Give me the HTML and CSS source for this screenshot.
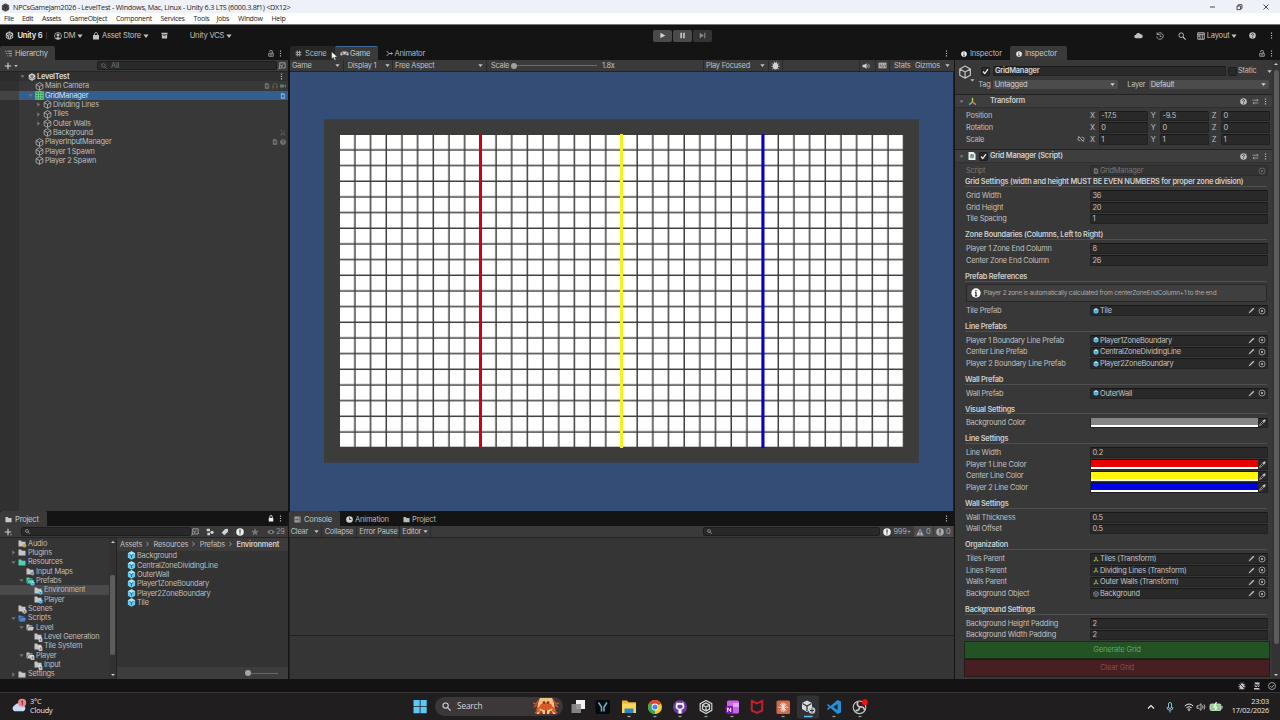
FILE: index.html
```html
<!DOCTYPE html>
<html lang="en">
<head>
<meta charset="utf-8">
<title>NPCsGameJam2026 - LevelTest</title>
<link rel="stylesheet" href="styles.css">
</head>
<body>
<svg class="defs" aria-hidden="true">
  <symbol id="cube" viewBox="0 0 16 16"><path d="M8 1.2 14 4.5v7L8 14.8 2 11.500v-7zM2 4.500 8 8l6-3.500M8 8v6.800" fill="none" stroke="currentColor" stroke-width="1.400" stroke-linejoin="round"/></symbol>
  <symbol id="prefab" viewBox="0 0 16 16"><path d="M8 .5 14.500 4v8L8 15.500 1.500 12V4z" fill="#69c9ea"/><path d="M8 .5 14.500 4 8 7.500 1.500 4z" fill="#a5e6fa"/><path d="M4.500 6 8 8l3.500-2M8 8v4.500" fill="none" stroke="#25698a" stroke-width="1.700"/></symbol>
  <symbol id="unity" viewBox="0 0 16 16"><path d="M8 .5 14.500 4.200v7.600L8 15.500l-6.500-3.700V4.200z" fill="currentColor"/><path d="M8 8 3.500 5.500M8 8l4.500-2.500M8 8v5M5.500 3.500 8 5l2.500-1.500M3.500 8.500v2.300l2.200 1.300M12.500 8.500v2.300l-2.200 1.300" fill="none" stroke="#222" stroke-width="1.500"/></symbol>
  <symbol id="gridic" viewBox="0 0 16 16"><path d="M1 1h14v14H1z" fill="#2f7550"/><path d="M1.500 1v14M6 1v14M10.300 1v14M14.500 1v14M1 1.500h14M1 6h14M1 10.300h14M1 14.500h14" stroke="#7de08d" stroke-width="1.500"/></symbol>
  <symbol id="down" viewBox="0 0 8 8"><path d="M.5 2h7L4 6.500z" fill="currentColor"/></symbol>
  <symbol id="right" viewBox="0 0 8 8"><path d="M2 .5v7L6.500 4z" fill="currentColor"/></symbol>
  <symbol id="kebab" viewBox="0 0 4 12"><path d="M1 1h2v2H1zM1 5h2v2H1zM1 9h2v2H1z" fill="currentColor"/></symbol>
  <symbol id="lock" viewBox="0 0 12 14"><path d="M1.500 6.500h9v6h-9zM3.500 4V2q0-1 1-1h3q1 0 1 1v4.500" fill="none" stroke="currentColor" stroke-width="1.500"/><path d="M4 9h4v1.500H4z" fill="currentColor"/></symbol>
  <symbol id="lockc" viewBox="0 0 12 14"><path d="M3.500 6V3.500a2.500 2.500 0 0 1 5 0V6" fill="none" stroke="currentColor" stroke-width="1.600"/><path d="M1.500 6h9v7h-9z" fill="currentColor"/></symbol>
  <symbol id="mag" viewBox="0 0 12 12"><circle cx="4.800" cy="4.800" r="3.500" fill="none" stroke="currentColor" stroke-width="1.400"/><path d="m7.500 7.500 4 4" stroke="currentColor" stroke-width="1.600"/></symbol>
  <symbol id="popout" viewBox="0 0 14 14"><path d="M3 6V1.500h9.500v9H8" fill="none" stroke="currentColor" stroke-width="1.300"/><circle cx="4.500" cy="8.500" r="2.500" fill="none" stroke="currentColor" stroke-width="1.300"/><path d="M2.500 10.500.5 13M6.500 6.500l3-2.500" stroke="currentColor" stroke-width="1.300"/></symbol>
  <symbol id="folder" viewBox="0 0 16 14"><path d="M1 1h5l2 2.500h7V13H1z" fill="currentColor"/></symbol>
  <symbol id="folderopen" viewBox="0 0 16 14"><path d="M1 12V1h5l2 2h5v2H4.500L2 11z" fill="currentColor"/><path d="M5 6h11l-2.500 7H2z" fill="currentColor"/></symbol>
  <symbol id="info" viewBox="0 0 16 16"><circle cx="8" cy="8" r="7.500" fill="currentColor"/><path d="M8 3v2.200M8 6.800V13M6.500 7H8M6.200 12.500h3.600" stroke="#2a2a2a" stroke-width="1.900"/></symbol>
  <symbol id="bang" viewBox="0 0 16 16"><circle cx="8" cy="8" r="7.500" fill="currentColor"/><path d="M8 3v6.500M8 11v2.200" stroke="#2a2a2a" stroke-width="2.200"/></symbol>
  <symbol id="help" viewBox="0 0 16 16"><circle cx="8" cy="8" r="7.500" fill="currentColor"/><path d="M5.500 6.200Q5.500 3.800 8 3.800t2.500 2.200Q10.500 7.500 8 8.500v1.300M8 11v2" fill="none" stroke="#2a2a2a" stroke-width="1.800"/></symbol>
  <symbol id="sliders" viewBox="0 0 16 16"><path d="M1 5h13M11 2l3 3-3 3M2 11.500h13M5.500 8.500l-3 3 3 3" fill="none" stroke="currentColor" stroke-width="1.500"/></symbol>
  <symbol id="check" viewBox="0 0 10 10"><path d="m1.500 5 2.500 3 4.500-6.500" fill="none" stroke="#eee" stroke-width="1.700"/></symbol>
  <symbol id="axes" viewBox="0 0 16 16"><path d="M8 9V1.500" stroke="#a7de4b" stroke-width="2.400"/><path d="M8 9 2 13.500" stroke="#60b9e8" stroke-width="2.400"/><path d="m8 9 6 4.500" stroke="#ec7b45" stroke-width="2.400"/></symbol>
  <symbol id="axesg" viewBox="0 0 16 16"><path d="M8 9V2" stroke="#b5d844" stroke-width="2.800"/><path d="M7.500 9.500 2 14" stroke="#6fcf76" stroke-width="2.800"/><path d="m9 9.500 5 4" stroke="#e7a13c" stroke-width="2.800"/></symbol>
  <symbol id="pencil" viewBox="0 0 12 12"><path d="m1 11 1-2.600L9 1.200 10.900 3 3.600 10z" fill="currentColor"/></symbol>
  <symbol id="target" viewBox="0 0 12 12"><circle cx="6" cy="6" r="4.500" fill="none" stroke="currentColor" stroke-width="1"/><circle cx="6" cy="6" r="1.500" fill="currentColor"/></symbol>
  <symbol id="dropper" viewBox="0 0 12 12"><path d="m1 11 .8-2.600 5-5 1.800 1.800-5 5z" fill="none" stroke="currentColor" stroke-width="1.100"/><path d="M6 2.500 9.500 6l.8-1.500 1.200-2.800L10 .5 7.500 1.700z" fill="currentColor"/></symbol>
  <symbol id="doc" viewBox="0 0 12 14"><path d="M1 .5h7l3 3V13.500H1z" fill="currentColor"/><path d="M3 5.500h6M3 8.500h6M5 4v7M7.500 4v7" stroke="#333"/></symbol>
  <symbol id="scriptic" viewBox="0 0 14 16"><path d="M0 0h10l4 4v12H0z" fill="#eee"/><path d="M3 6.500h8M3 10h8M5.800 4 5 12.500M9.200 4l-.8 8.500" stroke="#24855d" stroke-width="1.500"/></symbol>
  <symbol id="pad" viewBox="0 0 18 10"><path d="M5 1h8q4 0 4.500 5 0 4-3 3l-2-2h-7l-2 2q-3 1-3-3Q1 1 5 1z" fill="currentColor"/><path d="M4.800 2.500v3.600M3 4.300h3.600M12 4.300h3M13.500 2.800v3" stroke="#333" stroke-width="1.200"/></symbol>
  <symbol id="chev" viewBox="0 0 8 8"><path d="m2 .8 3.500 3.200L2 7.200" fill="none" stroke="currentColor" stroke-width="1.100"/></symbol>
  <symbol id="bug" viewBox="0 0 16 16"><ellipse cx="8" cy="9" rx="4.600" ry="6" fill="currentColor"/><path d="M1.500 4.500 5 7M14.500 4.500 11 7M.8 9.500h14.400M2 14.500 5 12M14 14.500 11 12M5.500 1l1.500 2.500M10.500 1 9 3.500" stroke="currentColor" stroke-width="1.500"/></symbol>
</svg>

<div class="app">
  <header class="title">
    <svg class="i9 ink"><use href="#unity"/></svg><span>NPCsGameJam2026 - LevelTest - Windows, Mac, Linux - Unity 6.3 LTS (6000.3.8f1) &lt;DX12&gt;</span>
    <svg class="win" viewBox="0 0 70 12"><path d="M9 6h5M62.500 3.500l5 5m0-5-5 5M36 5h3.600v3.600H36zM37.300 5V3.700h3.700v3.600h-1.200" fill="none" stroke="#222" stroke-width=".8"/></svg>
  </header>
  <nav class="menu"><span>File</span><span>Edit</span><span>Assets</span><span>GameObject</span><span>Component</span><span>Services</span><span>Tools</span><span>Jobs</span><span>Window</span><span>Help</span></nav>
  <div class="maintool">
    <svg class="i9"><use href="#unity"/></svg><b>Unity 6</b><i class="sep"></i>
    <svg class="i8" viewBox="0 0 16 16"><circle cx="8" cy="8" r="7" fill="none" stroke="currentColor" stroke-width="1.500"/><circle cx="8" cy="6" r="3" fill="currentColor"/><path d="M3 13q5-6 10 0-5 3-10 0z" fill="currentColor"/></svg><span>DM</span><svg class="i6"><use href="#down"/></svg>
    <svg class="i8" viewBox="0 0 16 16"><path d="M2 6h12v9H2z" fill="currentColor"/><path d="M5 8V4q0-3 3-3t3 3v4" fill="none" stroke="currentColor" stroke-width="1.500"/></svg><span>Asset Store</span><svg class="i6"><use href="#down"/></svg>
    <svg class="i7" viewBox="0 0 16 16"><path d="M1 1.500h14V5H1zM2 6h12v9H2z" fill="currentColor"/><path d="M5.500 8.500h5" stroke="#222" stroke-width="1.800"/></svg><span>Unity VCS</span><svg class="i6"><use href="#down"/></svg>
    <div class="play"><button><svg viewBox="0 0 10 10"><path d="M2 1v8l7-4z" fill="currentColor"/></svg></button><button><svg viewBox="0 0 10 10"><path d="M2 1h2.200v8H2zM6 1h2.200v8H6z" fill="currentColor"/></svg></button><button class="off"><svg viewBox="0 0 10 10"><path d="M1 1v8l6-4zM7.500 1H9v8H7.500z" fill="currentColor"/></svg></button></div>
    <svg class="cloud" viewBox="0 0 18 12"><path d="M4 11.500a3.500 3.500 0 0 1 0-7 5 5 0 0 1 9-1A4 4 0 0 1 14 11.500z" fill="currentColor"/></svg>
    <svg class="i8" viewBox="0 0 16 16"><path d="M2.500 4.500A6.500 6.500 0 1 1 1.500 9M2 1v4h4M8 4v4.500l3 1.500" fill="none" stroke="currentColor" stroke-width="1.500"/></svg>
    <svg class="i8"><use href="#mag"/></svg>
    <svg class="i8" viewBox="0 0 16 16"><path d="M1.500 1.500h13v13h-13zM1 4.500h14M6 4.500v10M10.500 4.500v10M2 8h4" fill="none" stroke="currentColor" stroke-width="1.800"/></svg><span>Layout</span><svg class="i6"><use href="#down"/></svg>
    <svg class="i7"><use href="#help"/></svg><svg class="keb"><use href="#kebab"/></svg>
  </div>

  <main class="work">
    <section class="left">
      <div class="tabs">
        <div class="tab on t-hier"><svg class="i7" viewBox="0 0 12 12"><path d="M0 2h2M4 2h8M2 6h2M6 6h6M4 10h1.500M7 10h5" stroke="currentColor" stroke-width="1.300"/></svg>Hierarchy</div>
        <span class="tabend"><svg class="lk"><use href="#lock"/></svg><svg class="keb"><use href="#kebab"/></svg></span>
      </div>
      <div class="tools hiertools"><svg class="i8 lite" viewBox="0 0 10 10"><path d="M5 1v8M1 5h8" stroke="currentColor" stroke-width="1.400"/></svg><svg class="i4"><use href="#down"/></svg><div class="search dim"><svg class="i6"><use href="#mag"/></svg>All</div><svg class="i8"><use href="#popout"/></svg></div>
      <div class="tree">
        <div class="row scene"><svg class="i5 tw"><use href="#down"/></svg><svg class="i8 wh"><use href="#unity"/></svg><b>LevelTest</b><span class="ends"><svg class="keb"><use href="#kebab"/></svg></span></div>
        <div class="row r1"><i class="tw"></i><svg class="i9"><use href="#cube"/></svg><span>Main Camera</span><span class="ends dim"><svg class="i6"><use href="#doc"/></svg><svg class="i6" viewBox="0 0 12 12"><path d="M2 11V5q0-4 4-4t4 4v6M1 7h2v4M11 7H9v4" fill="none" stroke="#86693a" stroke-width="1.300"/></svg><svg class="i6" viewBox="0 0 12 12"><path d="M0 3h8v6H0zM9 5l3-2v6L9 7z" fill="#527e80"/></svg></span></div>
        <div class="row r1 sel"><svg class="i5 tw"><use href="#down"/></svg><svg class="i9"><use href="#gridic"/></svg><span>GridManager</span><span class="ends"><svg class="i6 bluei"><use href="#doc"/></svg></span></div>
        <div class="row r2"><svg class="i5 tw"><use href="#right"/></svg><svg class="i9"><use href="#cube"/></svg><span>Dividing Lines</span></div>
        <div class="row r2"><svg class="i5 tw"><use href="#right"/></svg><svg class="i9"><use href="#cube"/></svg><span>Tiles</span></div>
        <div class="row r2"><svg class="i5 tw"><use href="#right"/></svg><svg class="i9"><use href="#cube"/></svg><span>Outer Walls</span></div>
        <div class="row r2"><i class="tw"></i><svg class="i9"><use href="#cube"/></svg><span>Background</span><span class="ends dim"><svg class="i6" viewBox="0 0 12 12"><path d="M1 1h2v2M7 1h2M5 5 2 11M6 5l4 6M3 8h2M10 3v2" fill="none" stroke="currentColor" stroke-width="1.300"/></svg></span></div>
        <div class="row r1"><i class="tw"></i><svg class="i9"><use href="#cube"/></svg><span>PlayerInputManager</span><span class="ends dim"><svg class="i6"><use href="#doc"/></svg><svg class="i6"><use href="#help"/></svg></span></div>
        <div class="row r1"><i class="tw"></i><svg class="i9"><use href="#cube"/></svg><span>Player 1 Spawn</span></div>
        <div class="row r1"><i class="tw"></i><svg class="i9"><use href="#cube"/></svg><span>Player 2 Spawn</span></div>
      </div>

      <div class="tabs low">
        <div class="tab on t-proj"><svg class="i7"><use href="#folder"/></svg>Project</div>
        <span class="tabend"><svg class="lk wh"><use href="#lockc"/></svg><svg class="keb"><use href="#kebab"/></svg></span>
      </div>
      <div class="tools projtools"><svg class="i8 lite" viewBox="0 0 10 10"><path d="M5 1v8M1 5h8" stroke="currentColor" stroke-width="1.400"/><path d="M7.500 8H10L8.700 9.500z" fill="currentColor"/></svg><div class="search"><svg class="i5"><use href="#mag"/></svg></div>
        <svg class="i8"><use href="#popout"/></svg>
        <svg class="i8 lite" viewBox="0 0 12 12"><path d="M1 1h5v4H1zM2 7h4v4H2z" fill="currentColor"/><circle cx="9" cy="6.500" r="2.500" fill="currentColor"/></svg>
        <svg class="i8 lite" viewBox="0 0 12 12"><path d="M6 1.500 10.500 1v4.500L5 11 1 7z" fill="currentColor"/></svg>
        <svg class="i8 wh"><use href="#bang"/></svg>
        <svg class="i8 dim" viewBox="0 0 12 12"><path d="m6 .5 1.600 3.700 4 .3-3 2.600 1 4L6 9l-3.600 2.100 1-4-3-2.600 4-.3z" fill="currentColor"/></svg>
        <svg class="i8 dim" viewBox="0 0 14 10"><path d="M0 5q7-8 14 0-7 8-14 0z" fill="currentColor"/><circle cx="7" cy="5" r="2" fill="#333"/></svg><span class="n29">29</span></div>
      <div class="proj">
        <div class="folders">
          <div class="row f1"><i class="tw"></i><span class="badged"><svg class="fi"><use href="#folder"/></svg><svg class="bdg" viewBox="0 0 8 8"><circle cx="4" cy="4" r="3" fill="#c9a63c"/></svg></span><span>Audio</span></div>
          <div class="row f1"><svg class="i5 tw"><use href="#right"/></svg><svg class="fi"><use href="#folder"/></svg><span>Plugins</span></div>
          <div class="row f1"><svg class="i5 tw"><use href="#down"/></svg><svg class="fi teal"><use href="#folder"/></svg><span>Resources</span></div>
          <div class="row f2"><i class="tw"></i><span class="badged"><svg class="fi"><use href="#folder"/></svg><svg class="bdg" viewBox="0 0 8 8"><circle cx="4" cy="4" r="3" fill="#8b9aa0"/></svg></span><span>Input Maps</span></div>
          <div class="row f2"><svg class="i5 tw"><use href="#down"/></svg><span class="badged"><svg class="fi teal"><use href="#folderopen"/></svg><svg class="bdg"><use href="#prefab"/></svg></span><span>Prefabs</span></div>
          <div class="row f3 cur"><i class="tw"></i><span class="badged"><svg class="fi"><use href="#folder"/></svg><svg class="bdg"><use href="#prefab"/></svg></span><span>Environment</span></div>
          <div class="row f3"><i class="tw"></i><span class="badged"><svg class="fi"><use href="#folder"/></svg><svg class="bdg"><use href="#prefab"/></svg></span><span>Player</span></div>
          <div class="row f1"><i class="tw"></i><span class="badged"><svg class="fi"><use href="#folder"/></svg><svg class="bdg wh"><use href="#unity"/></svg></span><span>Scenes</span></div>
          <div class="row f1"><svg class="i5 tw"><use href="#down"/></svg><svg class="fi blue"><use href="#folderopen"/></svg><span>Scripts</span></div>
          <div class="row f2"><svg class="i5 tw"><use href="#down"/></svg><svg class="fi"><use href="#folderopen"/></svg><span>Level</span></div>
          <div class="row f3"><i class="tw"></i><span class="badged"><svg class="fi"><use href="#folder"/></svg><svg class="bdg wh"><use href="#doc"/></svg></span><span>Level Generation</span></div>
          <div class="row f3"><i class="tw"></i><span class="badged"><svg class="fi"><use href="#folder"/></svg><svg class="bdg wh"><use href="#doc"/></svg></span><span>Tile System</span></div>
          <div class="row f2"><svg class="i5 tw"><use href="#down"/></svg><span class="badged"><svg class="fi"><use href="#folderopen"/></svg><svg class="bdg wh"><use href="#doc"/></svg></span><span>Player</span></div>
          <div class="row f3"><i class="tw"></i><span class="badged"><svg class="fi"><use href="#folder"/></svg><svg class="bdg wh"><use href="#doc"/></svg></span><span>Input</span></div>
          <div class="row f1"><svg class="i5 tw"><use href="#right"/></svg><svg class="fi"><use href="#folder"/></svg><span>Settings</span></div>
        </div>
        <div class="vscroll"><svg viewBox="0 0 8 8"><path d="M0 6h8L4 2z" fill="#ccc"/></svg><i></i><svg viewBox="0 0 8 8"><path d="M0 2h8L4 6z" fill="#ccc"/></svg></div>
        <div class="assets">
          <div class="crumbs"><span>Assets</span><svg class="i6"><use href="#chev"/></svg><span>Resources</span><svg class="i6"><use href="#chev"/></svg><span>Prefabs</span><svg class="i6"><use href="#chev"/></svg><b>Environment</b></div>
          <div class="files">
            <div class="row"><svg class="i9"><use href="#prefab"/></svg>Background</div>
            <div class="row"><svg class="i9"><use href="#prefab"/></svg>CentralZoneDividingLine</div>
            <div class="row"><svg class="i9"><use href="#prefab"/></svg>OuterWall</div>
            <div class="row"><svg class="i9"><use href="#prefab"/></svg>Player1ZoneBoundary</div>
            <div class="row"><svg class="i9"><use href="#prefab"/></svg>Player2ZoneBoundary</div>
            <div class="row"><svg class="i9"><use href="#prefab"/></svg>Tile</div>
          </div>
          <div class="foot"><i class="knob"></i><i class="track"></i></div>
        </div>
      </div>
    </section>

    <section class="center">
      <div class="tabs">
        <div class="tab dimtab t-scene"><svg class="i7" viewBox="0 0 12 12"><path d="M4 1v10M8 1v10M1 4h10M1 8h10" stroke="currentColor" stroke-width="1.500"/></svg>Scene</div>
        <div class="tab on focus t-game"><svg class="padic"><use href="#pad"/></svg>Game</div>
        <div class="tab t-anim"><svg class="i7" viewBox="0 0 12 12"><path d="M1 1.500l4 4.500-4 4.500M5 6h6M9 4l2 2-2 2" fill="none" stroke="currentColor" stroke-width="1.500"/></svg>Animator</div>
        <span class="tabend"><svg class="keb"><use href="#kebab"/></svg></span>
        <svg class="cursor" viewBox="0 0 10 14"><path d="M1 1v10l2.500-2 1.700 4 1.800-.8-1.700-3.700H9z" fill="#fff" stroke="#333" stroke-width=".6"/></svg>
      </div>
      <div class="tools gametools">
        <span>Game</span><svg class="i5"><use href="#down"/></svg><span class="cell">Display 1</span><svg class="i5"><use href="#down"/></svg><span class="cell tight">Free Aspect</span><svg class="i5"><use href="#down"/></svg><span class="cell">Scale</span>
        <div class="slider"><i></i></div><span>1.8x</span>
        <span class="cell tight">Play Focused</span><svg class="i5"><use href="#down"/></svg><span class="cell icn"><svg class="i9 lite"><use href="#bug"/></svg></span><i class="cell"></i>
        <span class="cell icn"><svg class="i8 lite" viewBox="0 0 14 12"><path d="M1 4h3l4-3v10L4 8H1z" fill="currentColor"/><path d="M9.500 3.500q2 2.500 0 5M11.500 2q3 4 0 8" fill="none" stroke="currentColor"/></svg></span>
        <span class="cell icn"><svg class="i9" viewBox="0 0 16 12"><path d="M1 1h14v10H1z" fill="currentColor"/><path d="M3 3.500h2M7 3.500h2M11 3.500h2M3 6h3M8 6h2M12 6h2M3 8.500h1.500M6 8.500h5M12 8.500h2" stroke="#333" stroke-width="1.300"/></svg></span>
        <span class="cell">Stats</span><span>Gizmos</span><svg class="i5"><use href="#down"/></svg>
      </div>
      <div class="gameview">
        <svg class="board" viewBox="324 119 595 344">
          <defs><pattern id="tiles" x="340" y="135" width="15.680" height="15.670" patternUnits="userSpaceOnUse"><rect width="14.200" height="14.200" fill="#fff"/></pattern></defs>
          <path d="M324 119.300h595v343.500H324z" fill="#3c3c3b"/>
          <path d="M340 135h563.200v312.100H340z" fill="url(#tiles)"/>
          <path d="M480.500 134v314" stroke="#d00010" stroke-width="3"/>
          <path d="M621.500 134v314" stroke="#f8f01c" stroke-width="3"/>
          <path d="M763 134v314" stroke="#0c00c4" stroke-width="3"/>
        </svg>
      </div>
      <div class="tabs low">
        <div class="tab on t-cons"><svg class="i7" viewBox="0 0 12 12"><path d="M1 1h10v10H1z" fill="currentColor"/><path d="M2 3.500h6M2 6h6M2 8.500h6M9 1v10" stroke="#333" stroke-width="1.200"/></svg>Console</div>
        <div class="tab t-anm"><svg class="i7 lite" viewBox="0 0 12 12"><circle cx="6" cy="6" r="5.700" fill="currentColor"/><path d="M6 2.500V6h3" fill="none" stroke="#222" stroke-width="1.400"/></svg>Animation</div>
        <div class="tab t-prj"><svg class="i7"><use href="#folder"/></svg>Project</div>
        <span class="tabend"><svg class="keb"><use href="#kebab"/></svg></span>
      </div>
      <div class="tools constools"><span>Clear</span><svg class="i5"><use href="#down"/></svg><span class="cell">Collapse</span><span class="cell">Error Pause</span><span class="cell">Editor</span><svg class="i5"><use href="#down"/></svg><i class="cell"></i>
        <div class="search"><svg class="i5"><use href="#mag"/></svg></div>
        <span class="cnt"><svg class="i8 wh"><use href="#bang"/></svg>999+</span><span class="cnt lit"><svg class="i8" viewBox="0 0 16 16"><path d="M8 1 15.500 15H.5z" fill="currentColor"/><path d="M8 5v5M8 11.500v2" stroke="#333" stroke-width="1.800"/></svg>0</span><span class="cnt lit"><svg class="i8"><use href="#bang"/></svg>0</span></div>
      <div class="console"><div class="log"></div></div>
    </section>

    <section class="inspector">
      <div class="tabs">
        <div class="tab t-in1"><svg class="i6 wh"><use href="#info"/></svg>Inspector</div>
        <div class="tab on t-in2"><svg class="i6 wh"><use href="#info"/></svg>Inspector</div>
        <span class="tabend"><svg class="lk"><use href="#lock"/></svg><svg class="keb"><use href="#kebab"/></svg></span>
      </div>
      <div class="insp">
        <div class="body">
          <div class="objhead">
            <svg class="big" viewBox="0 0 18 18"><use href="#cube" width="15" height="15"/><path d="M13 15h4.500l-2.200 2.500z" fill="currentColor"/></svg>
            <div class="l1"><span class="chk"><svg><use href="#check"/></svg></span><b class="inp">GridManager</b><span class="chk"></span><span class="st">Static</span><svg class="i5"><use href="#down"/></svg></div>
            <div class="l2"><span>Tag</span><span class="dd">Untagged<svg class="i5"><use href="#down"/></svg></span><span>Layer</span><span class="dd">Default<svg class="i5"><use href="#down"/></svg></span></div>
          </div>
          <div class="comp"><svg class="i5 tw"><use href="#down"/></svg><svg class="i9"><use href="#axes"/></svg><span></span><b>Transform</b><svg class="i7"><use href="#help"/></svg><svg class="i7"><use href="#sliders"/></svg><svg class="keb"><use href="#kebab"/></svg></div>
          <div class="xyzs">
            <div class="xyz"><span>Position</span><i></i><em>X</em><span class="inp">-17.5</span><em>Y</em><span class="inp">-9.5</span><em>Z</em><span class="inp">0</span></div>
            <div class="xyz"><span>Rotation</span><i></i><em>X</em><span class="inp">0</span><em>Y</em><span class="inp">0</span><em>Z</em><span class="inp">0</span></div>
            <div class="xyz"><span>Scale</span><svg class="i8" viewBox="0 0 14 12"><path d="M6 3.500 4.500 3a3 3 0 0 0 0 6H6M8 3.500 9.500 3a3 3 0 0 1 0 6H8M2 1l10 10" fill="none" stroke="currentColor" stroke-width="1.300"/></svg><em>X</em><span class="inp">1</span><em>Y</em><span class="inp">1</span><em>Z</em><span class="inp">1</span></div>
          </div>
          <div class="comp"><svg class="i5 tw"><use href="#down"/></svg><svg class="i8"><use href="#scriptic"/></svg><span class="chk"><svg><use href="#check"/></svg></span><b>Grid Manager (Script)</b><svg class="i7"><use href="#help"/></svg><svg class="i7"><use href="#sliders"/></svg><svg class="keb"><use href="#kebab"/></svg></div>
          <div class="props">
            <div class="p obj gray"><span>Script</span><div class="inp"><svg class="i6"><use href="#doc"/></svg><span>GridManager</span><svg class="i8"><use href="#target"/></svg></div></div>
            <h4 class="first">Grid Settings (width and height MUST BE EVEN NUMBERS for proper zone division)</h4>
            <div class="p"><span>Grid Width</span><div class="inp">36</div></div>
            <div class="p"><span>Grid Height</span><div class="inp">20</div></div>
            <div class="p"><span>Tile Spacing</span><div class="inp">1</div></div>
            <h4>Zone Boundaries (Columns, Left to Right)</h4>
            <div class="p"><span>Player 1 Zone End Column</span><div class="inp">8</div></div>
            <div class="p"><span>Center Zone End Column</span><div class="inp">26</div></div>
            <h4>Prefab References</h4>
            <div class="note"><svg><use href="#info"/></svg>Player 2 zone is automatically calculated from centerZoneEndColumn+1 to the end</div>
            <div class="p obj"><span>Tile Prefab</span><div class="inp"><svg class="i6"><use href="#prefab"/></svg><span>Tile</span><svg class="i7"><use href="#pencil"/></svg><svg class="i8"><use href="#target"/></svg></div></div>
            <h4>Line Prefabs</h4>
            <div class="p obj"><span>Player 1 Boundary Line Prefab</span><div class="inp"><svg class="i6"><use href="#prefab"/></svg><span>Player1ZoneBoundary</span><svg class="i7"><use href="#pencil"/></svg><svg class="i8"><use href="#target"/></svg></div></div>
            <div class="p obj"><span>Center Line Prefab</span><div class="inp"><svg class="i6"><use href="#prefab"/></svg><span>CentralZoneDividingLine</span><svg class="i7"><use href="#pencil"/></svg><svg class="i8"><use href="#target"/></svg></div></div>
            <div class="p obj"><span>Player 2 Boundary Line Prefab</span><div class="inp"><svg class="i6"><use href="#prefab"/></svg><span>Player2ZoneBoundary</span><svg class="i7"><use href="#pencil"/></svg><svg class="i8"><use href="#target"/></svg></div></div>
            <h4>Wall Prefab</h4>
            <div class="p obj"><span>Wall Prefab</span><div class="inp"><svg class="i6"><use href="#prefab"/></svg><span>OuterWall</span><svg class="i7"><use href="#pencil"/></svg><svg class="i8"><use href="#target"/></svg></div></div>
            <h4>Visual Settings</h4>
            <div class="p col"><span>Background Color</span><div class="inp"><i class="sw c-gray"></i><svg class="i7"><use href="#dropper"/></svg></div></div>
            <h4>Line Settings</h4>
            <div class="p"><span>Line Width</span><div class="inp">0.2</div></div>
            <div class="p col"><span>Player 1 Line Color</span><div class="inp"><i class="sw c-red"></i><svg class="i7"><use href="#dropper"/></svg></div></div>
            <div class="p col"><span>Center Line Color</span><div class="inp"><i class="sw c-yellow"></i><svg class="i7"><use href="#dropper"/></svg></div></div>
            <div class="p col"><span>Player 2 Line Color</span><div class="inp"><i class="sw c-blue"></i><svg class="i7"><use href="#dropper"/></svg></div></div>
            <h4>Wall Settings</h4>
            <div class="p"><span>Wall Thickness</span><div class="inp">0.5</div></div>
            <div class="p"><span>Wall Offset</span><div class="inp">0.5</div></div>
            <h4>Organization</h4>
            <div class="p obj"><span>Tiles Parent</span><div class="inp"><svg class="i6"><use href="#axesg"/></svg><span>Tiles (Transform)</span><svg class="i7"><use href="#pencil"/></svg><svg class="i8"><use href="#target"/></svg></div></div>
            <div class="p obj"><span>Lines Parent</span><div class="inp"><svg class="i6"><use href="#axesg"/></svg><span>Dividing Lines (Transform)</span><svg class="i7"><use href="#pencil"/></svg><svg class="i8"><use href="#target"/></svg></div></div>
            <div class="p obj"><span>Walls Parent</span><div class="inp"><svg class="i6"><use href="#axesg"/></svg><span>Outer Walls (Transform)</span><svg class="i7"><use href="#pencil"/></svg><svg class="i8"><use href="#target"/></svg></div></div>
            <div class="p obj"><span>Background Object</span><div class="inp"><svg class="i6"><use href="#cube"/></svg><span>Background</span><svg class="i7"><use href="#pencil"/></svg><svg class="i8"><use href="#target"/></svg></div></div>
            <h4>Background Settings</h4>
            <div class="p"><span>Background Height Padding</span><div class="inp">2</div></div>
            <div class="p"><span>Background Width Padding</span><div class="inp">2</div></div>
          </div>
          <div class="act gen">Generate Grid</div>
          <div class="act clr">Clear Grid</div>
        </div>
        <div class="vscroll ivs"><svg viewBox="0 0 8 8"><path d="M0 6h8L4 2z" fill="#ccc"/></svg><i></i><svg viewBox="0 0 8 8"><path d="M0 2h8L4 6z" fill="#ccc"/></svg></div>
      </div>
    </section>
  </main>

  <div class="status">
    <svg class="i8" viewBox="0 0 16 16"><use href="#bug" width="16" height="16"/><path d="m1 1 14 14" stroke="#131313" stroke-width="1.500"/></svg>
    <svg class="i8" viewBox="0 0 16 16"><path d="M3 1h10v4H3zM2 7h12l-3 3H5zM2 12h12v3H2z" fill="currentColor"/><path d="m1 1 14 14" stroke="#111" stroke-width="1.500"/></svg>
    <svg class="i8" viewBox="0 0 16 16"><circle cx="8" cy="8" r="7" fill="none" stroke="currentColor" stroke-width="1.400"/><path d="m4.500 8 3 3 4.500-5.500" fill="none" stroke="currentColor" stroke-width="1.600"/></svg>
  </div>

  <footer class="taskbar">
    <div class="weather"><svg viewBox="0 0 18 16"><path d="M4 14.500a3.500 3.500 0 0 1 0-6.500 5 5 0 0 1 8-1 4 4 0 0 1 2 7.500z" fill="#c9dcf7"/><circle cx="12.500" cy="5" r="4.600" fill="#f0828f"/><path d="m11.500 3.800 1.300-1v4.600" fill="none" stroke="#4a1a22" stroke-width=".9"/></svg><div>3°C<br>Cloudy</div></div>
    <svg class="ic" viewBox="0 0 20 26"><path d="M3.500 6h6.200v6.200H3.500zM10.500 6h6.200v6.200h-6.200zM3.500 13h6.200v6.200H3.500zM10.500 13h6.200v6.200h-6.200z" fill="#5cc8f5"/></svg>
    <div class="tsearch"><svg class="i9" ><use href="#mag"/></svg><span>Search</span><svg class="crab" viewBox="0 0 26 17"><path d="M5 5a8 7.500 0 0 1 16 0l1.500 11h-19z" fill="#f0c583"/><path d="M1 9l3-2M0 5l3 1 3-4M25 9l-3-2M26 5l-3 1-3-4M3 12l5-3M23 12l-5-3M2 15l5-3M24 15l-5-3" stroke="#cf4f22" stroke-width="1.600" fill="none"/><ellipse cx="13" cy="8.500" rx="6.500" ry="3.800" fill="#d65a26"/><path d="M6 16q1-4 3-3l1 3M20 16q-1-4-3-3l-1 3M12 12h2v4h-2z" fill="#a63a1c"/><circle cx="11" cy="4.500" r="1.300" fill="#7b2a16"/><circle cx="15" cy="4.500" r="1.300" fill="#7b2a16"/></svg></div>
    <svg class="ic" viewBox="0 0 20 26"><path d="M8 6h9v9H8z" fill="#f3f3f3"/><path d="M3.500 10H13v9H3.500z" fill="#8e8e8e" opacity=".9"/></svg>
    <svg class="ic" viewBox="0 0 20 26"><rect x="2.500" y="6" width="14.500" height="14" rx="1.500" fill="#07090c"/><path d="M5.500 8.500 8.500 13v4.500M14 8.500 11 13v4.500" fill="none" stroke="#6fb6cf" stroke-width="1.500"/></svg>
    <svg class="ic" viewBox="0 0 20 26"><path d="M3 6.500h5l1.500 1.700H17V19H3z" fill="#e9b432"/><path d="M3 9.500h14V19H3z" fill="#fbd558"/><path d="M5.500 14.500h9V19h-9z" fill="#2a86c9"/><path d="M8.500 22.500h3" stroke="#aaa" stroke-width="1.300"/></svg>
    <svg class="ic" viewBox="0 0 20 26"><circle cx="10" cy="13" r="7" fill="#fbcb2f"/><path d="M10 13 4 9.500A7 7 0 0 1 16 9.500z" fill="#e5432f"/><path d="M10 13 4 9.500A7 7 0 0 0 10 20z" fill="#36a852"/><circle cx="10" cy="13" r="3.400" fill="#fff"/><circle cx="10" cy="13" r="2.600" fill="#4486ee"/><path d="M8.500 22.500h3" stroke="#999" stroke-width="1.300"/></svg>
    <svg class="ic" viewBox="0 0 20 26"><circle cx="10" cy="13" r="7" fill="#6d3a9e"/><path d="M10 8.700c-.8 0-1.400.1-2 .3C7 8.300 6.400 8.300 6.400 8.300v1.700c-2 3 0 5.300 2 5.600v3.800h3.200v-3.800c2-.3 4-2.600 2-5.600V8.300s-.7 0-1.600.7a7 7 0 0 0-2-.3z" fill="#fff"/><path d="M8 14.500q-1.500-3 .5-3.800h3q2 .8.500 3.800z" fill="#6d3a9e"/><path d="M8.500 22.500h3" stroke="#999" stroke-width="1.300"/></svg>
    <svg class="ic" viewBox="0 0 20 26"><path d="m10 6.500 5.800 3.200v6.600L10 19.500l-5.800-3.200V9.700z" fill="none" stroke="#cfd4d4" stroke-width="1.200"/><path d="m10 9 3.500 2v4L10 17l-3.500-2v-4zM6.500 11l3.500 2 3.500-2M10 13v4" fill="none" stroke="#cfd4d4" stroke-width="1.300"/><path d="M8.500 22.500h3" stroke="#999" stroke-width="1.300"/></svg>
    <svg class="ic" viewBox="0 0 20 26"><rect x="5" y="6.500" width="12" height="13" rx="1.500" fill="#ca64e6"/><path d="M11 9h6v4h-6z" fill="#e4a4f4"/><rect x="3.500" y="12" width="7.500" height="7.500" rx="1" fill="#7b18a8"/><path d="M5.700 17.800v-4l3 4v-4" fill="none" stroke="#fff"/><path d="M8.500 22.500h3" stroke="#999" stroke-width="1.300"/></svg>
    <svg class="ic" viewBox="0 0 20 26"><path d="m4.800 7 5.200 2.500L15.200 7v9.500L10 19l-5.200-2.500z" fill="none" stroke="#c02033" stroke-width="2"/></svg>
    <svg class="ic" viewBox="0 0 20 26"><rect x="3.500" y="6.500" width="13.500" height="13.500" rx="1.500" fill="#d4684a"/><path d="M10.200 8.500v9.500M5.500 13.200H15M7 10l6.500 6.500M13.500 10 7 16.500M8.500 9l3.500 8.500M12 9l-3.500 8.500" stroke="#fbeee6" stroke-width=".9"/><path d="M8.500 22.500h3" stroke="#999" stroke-width="1.300"/></svg>
    <svg class="ic" viewBox="0 0 20 26"><rect x="-1" y="1.500" width="22" height="23" rx="2" fill="#303236"/><path d="m9 6.500 5 2.500v6L9 18l-5-3V9z" fill="#d7dcdc"/><path d="m4.500 9.500 4.500 2.600 4.500-2.600M9 12v5" fill="none" stroke="#33373a" stroke-width="1.300"/><circle cx="14" cy="16.500" r="3.300" fill="#c1c9cc"/><path d="M14 14.500v4M12 16.500h4" stroke="#34363a"/><path d="M6 22.500h8.500" stroke="#5eb6e8" stroke-width="1.600"/></svg>
    <svg class="ic" viewBox="0 0 20 26"><path d="m13.500 6 3.500 1.500v11L13.500 20 6.500 14 4 16l-1-1 2-2-2-2 1-1 2.500 2z" fill="#2490d8"/><path d="m13.500 10-4 3 4 3z" fill="#1f1c1d"/><path d="M8.500 22.500h3" stroke="#999" stroke-width="1.300"/></svg>
    <svg class="ic" viewBox="0 0 20 26"><circle cx="9.500" cy="13.300" r="6.300" fill="#242424" stroke="#c8c8c8" stroke-width="1.100"/><path d="M9.500 13Q6 11 8 8M9.500 13q4-1 5 3M9.500 13q0 4-4 3.500" fill="none" stroke="#c8c8c8" stroke-width="1.700"/><circle cx="14.800" cy="8.300" r="3" fill="#f0120f"/><path d="M8.500 22.500h3" stroke="#999" stroke-width="1.300"/></svg>
    <div class="tray">
      <svg viewBox="0 0 10 14"><path d="M2 8.500 5 5.500l3 3" fill="none" stroke="#eee" stroke-width="1.200"/></svg>
      <svg viewBox="0 0 10 14"><rect x="3.500" y="2.500" width="3" height="6" rx="1.500" fill="none" stroke="#7fc4dc"/><path d="M2 7q0 3.300 3 3.300T8 7M5 10.500v2" fill="none" stroke="#7fc4dc"/></svg>
      <svg viewBox="0 0 10 14"><path d="M.8 6q4.200-4 8.400 0M2.300 7.800q2.700-2.400 5.400 0M3.700 9.400q1.300-1 2.600 0" fill="none" stroke="#eee"/><circle cx="5" cy="10.500" r=".7" fill="#eee"/></svg>
      <svg viewBox="0 0 10 14"><path d="M1 5.800h1.700L5 3.700v6.600L2.700 8.200H1zM6.500 5.500q1 1.500 0 3M8 4.500q1.800 2.500 0 5" fill="none" stroke="#ddd" stroke-width=".8"/></svg>
      <svg class="bat" viewBox="0 0 14 14"><rect x="1" y="4" width="11" height="6.500" rx="1.500" fill="#8fd088" stroke="#dfe9dd" stroke-width=".8"/><path d="M13 6v2.500" stroke="#ddd"/><path d="M7.500 2 5 7h2.500L6.500 10" fill="none" stroke="#fff" stroke-width="1.200"/></svg>
      <div class="clock">23:03<br>17/02/2026</div>
    </div>
  </footer>
</div>
</body>
</html>
```
FILE: styles.css
```css
* { box-sizing: border-box; }
body { margin: 0; background: #141414; font-family: Inter, "Liberation Sans", sans-serif; font-size: 7.4px; letter-spacing: -.22px; line-height: 1; color: #c0c0c0; }
svg { display: block; flex: none; }
i, em { font-style: normal; }
b { font-weight: 600; }
.defs { position: absolute; width: 0; height: 0; }
.i4 { width: 4px; height: 4px; }
.i5 { width: 5px; height: 5px; }
.i6 { width: 6px; height: 6px; }
.i7 { width: 7px; height: 7px; }
.i8 { width: 8px; height: 8px; }
.i9 { width: 9px; height: 9px; }
.keb { width: 3px; height: 7px; }
.lk { width: 6px; height: 7px; }
.lite { color: #d2d2d2; }
.wh { color: #f2f2f2; }
.ink { color: #555; }
.dim { color: #777; }
.bluei { color: #7bb5e8; }

.app { width: 1280px; height: 720px; overflow: hidden; display: grid; grid-template-rows: 13px 12px 21px 633px 13px 28px; white-space: nowrap; }
.title { background: #eef2f8; color: #1d1d1d; display: flex; align-items: center; gap: 3px; padding: 1px 9px 0 1px; font: 7.2px "Open Sans", sans-serif; letter-spacing: -.24px; }
.title .win { width: 70px; height: 12px; margin-left: auto; }
.menu { background: #fff; border-bottom: 1px solid #777; color: #222; font: 7px "Open Sans", sans-serif; letter-spacing: -.3px; display: grid; grid-template-columns: 18px 20px 27.500px 46.500px 44.500px 33px 23px 21.500px 33.500px 30px; align-items: center; padding-left: 4px; }

.maintool { background: #141414; display: grid; align-items: center; padding-left: 5px; font-size: 7.6px;
  grid-template-columns: 12.500px 28.500px 7.500px 10px 12.500px 16px 10px 40px 19px 28.700px 35.300px 428px 481.500px 21.500px 22px 19px 9.700px 23.800px 18.500px 21px 5px; }
.maintool b { color: #eee; }
.maintool .sep { width: 1px; height: 7px; background: #3a3a3a; }
.maintool .i6 { margin-left: 1px; }
.cloud { width: 9px; height: 7px; }
.play { display: flex; gap: 1px; }
.play button { width: 19px; height: 12px; border: 0; border-radius: 2px; padding: 0; background: #4a4a4a; color: #d0d0d0; display: grid; place-items: center; }
.play button.off { background: #343434; color: #8a8a8a; }
.play svg { width: 7px; height: 7px; }

.work { display: grid; grid-template-columns: 289px 665px 326px; min-height: 0; background: #151515; }
.left, .center { display: grid; grid-template-rows: 14px 12px 439px 15px 12px 141px; min-height: 0; min-width: 0; }
.left { padding-right: 1px; }
.tabs { display: flex; background: #141414; position: relative; }
.tab { display: flex; align-items: center; gap: 3px; padding-left: 5px; border-radius: 2px 2px 0 0; border-top: 1px solid transparent; color: #b8b8b8; font-size: 7.6px; }
.tab.on { background: #3a3a3a; color: #c6c6c6; }
.tab.dimtab { background: #262626; }
.tab.focus { border-top-color: #3d6c9c; }
.low .tab { padding-top: 1px; }
.tabend { margin-left: auto; display: flex; align-items: center; gap: 5px; padding-right: 6px; color: #bbb; }
.t-hier { width: 55px; }
.t-proj { width: 47px; }
.t-scene { width: 45px; margin-left: 1px; }
.t-game { width: 43px; gap: 1px; }
.t-anim { margin-left: 2.500px; gap: 2px; }
.t-cons { width: 51px; }
.t-anm { margin-left: 2px; padding-left: 4px; gap: 2px; width: 57px; }
.t-prj { padding-left: 4px; gap: 2px; }
.t-in1 { padding-left: 6px; width: 55px; }
.t-in2 { width: 57px; padding-left: 6px; }
.padic { width: 9px; height: 5px; }
.cursor { position: absolute; left: 42px; top: 5px; width: 7px; height: 10px; }

.tools { background: #3a3a3a; border-bottom: 1px solid #242424; display: grid; align-items: center; min-width: 0; }
.search { background: #292929; height: 9px; border-radius: 2px; border: 1px solid #1d1d1d; display: flex; align-items: center; gap: 4px; padding-left: 3px; }
.hiertools { grid-template-columns: 10px 83px 180px 8px; padding-left: 4px; }
.hiertools .i8:last-child { margin-left: 1px; }

.tree { background: #383838 linear-gradient(90deg, #303030 19px, transparent 19px); }
.row { height: 9.330px; display: flex; align-items: center; gap: 1px; color: #bdbdbd; }
.row .tw { width: 5px; margin-right: 1px; color: #757575; }
.row.scene { background: linear-gradient(90deg, #2c2c2c 19px, #303030 19px); padding-left: 20px; gap: 1.500px; color: #ddd; }
.row.r1 { padding-left: 28px; }
.row.r2 { padding-left: 36px; }
.row.sel { background: linear-gradient(90deg, #444 19px, #345e8d 19px); color: #d2e2f2; }
.ends { margin-left: auto; padding-right: 2px; display: flex; gap: 2px; align-items: center; }
.scene .ends { padding-right: 5px; color: #ccc; }
.tree .row { padding-top: .4px; }

.projtools { grid-template-columns: 16.500px 170.500px 14.500px 15.500px 14.500px 15.500px 16px 9px 12px; padding-left: 4px; }
.n29 { color: #999; }
.proj { display: grid; grid-template-columns: 109px 8px 171px; background: #353535; min-height: 0; overflow: hidden; }
.folders { overflow: hidden; padding-top: .8px; }
.folders .row { gap: 2px; }
.folders .row.f1 { padding-left: 11px; }
.folders .row.f2 { padding-left: 19px; }
.folders .row.f3 { padding-left: 27px; }
.folders .row .tw { margin-right: 0; }
.folders .row.cur { background: #4a4a4a; }
.fi { width: 8px; height: 7px; color: #c5c5c5; }
.teal { color: #4fd1b0; }
.blue { color: #4a88cf; }
.badged { position: relative; }
.bdg { position: absolute; right: -1px; bottom: -1.500px; width: 5px; height: 5px; }
.vscroll { background: #323232; display: grid; grid-template-rows: 8px 1fr 8px; justify-items: center; align-items: center; border-right: 1px solid #222; }
.vscroll svg { width: 4px; height: 4px; }
.vscroll i { width: 5px; height: 80px; background: #5c5c5c; border-radius: 2px; align-self: start; margin-top: 29px; }
.assets { display: grid; grid-template-rows: 12.500px 1fr 12px; background: #333; min-height: 0; min-width: 0; }
.crumbs { background: #3b3b3b; display: flex; align-items: center; padding-left: 3px; gap: 3.200px; }
.crumbs .i6 { width: 5px; }
.crumbs b { color: #d0d0d0; }
.files { padding: .8px 0 0 10px; }
.files .row { gap: 1px; }
.foot { background: #3c3c3c; display: flex; align-items: center; padding-left: 128px; }
.knob { width: 6px; height: 6px; border-radius: 50%; background: #a4a4a4; }
.track { width: 27px; height: 1px; background: #666; }

.gametools { margin-left: 1px; padding-left: 2px; grid-template-columns: 43px 7.700px 42.100px 7.700px 86px 7.500px 25.500px 90.500px 101.500px 56.700px 7.800px 14.500px 77px 15.500px 14px 26px 30.500px 6px; }
.cell { border-left: 1px solid #2a2a2a; height: 11px; display: flex; align-items: center; padding-left: 2.200px; }
.gametools .cell { padding-left: 4px; }
.gametools .cell.tight { padding-left: 1.500px; }
.gametools .cell.icn { padding-left: 2px; }
.slider { width: 86px; height: 1px; background: #6b6b6b; display: flex; align-items: center; }
.slider i { width: 6px; height: 6px; border-radius: 50%; background: #a0a0a0; flex: none; }
.gameview { background: #334d76; margin-left: 1px; border-right: 1px solid #222; }
.board { width: 595px; height: 344px; margin: 47px 0 0 34px; }
.constools { grid-template-columns: 23px 7.800px 34.500px 43px 24px 7.500px 273px 177px 33.500px 20px 20px; padding-left: 1.700px; }
.constools .search { width: 177px; }
.cnt { display: flex; gap: 2px; align-items: center; padding-left: 3px; height: 11px; color: #aaa; }
.cnt.lit { background: #4b4b4b; margin-right: 1px; padding-left: 2px; }
.console { background: #353535; border-left: 1px solid #222; }
.log { height: 98px; border-bottom: 1px solid #222; }

.inspector { display: grid; grid-template-rows: 14px 619px; padding-left: 1px; }
.insp { display: grid; grid-template-columns: 317px 8px; background: #383838; min-height: 0; }
.inspector .tabend { padding-right: 7px; }
.body { min-width: 0; }
.objhead { height: 35px; display: grid; grid-template-columns: 22.500px 1fr; grid-template-rows: 14px 14px; padding: 4px 0 0 3px; border-bottom: 1px solid #222; }
.big { width: 17px; height: 17px; grid-row: 1 / 3; margin-top: 1px; }
.inp { background: #292929; border: 1px solid #222; border-top-color: #181818; border-radius: 1.500px; height: 10.700px; display: flex; align-items: center; padding-left: 1.500px; color: #c2c2c2; min-width: 0; }
.l1 { display: grid; grid-template-columns: 12.500px 234.500px 10.500px 29px 6px; align-items: center; }
.l1 .inp { color: #d5d5d5; margin-right: 2px; padding-left: 1px; }
.chk { width: 9px; height: 9px; background: #292929; border: 1px solid #1c1c1c; border-radius: 1.500px; display: grid; place-items: center; }
.chk svg { width: 7px; height: 7px; }
.l2 { display: grid; grid-template-columns: 15px 134px 22px 120px; align-items: center; margin: .4px 0 0 -2.300px; height: 12px; align-self: start; }
.dd { background: #4c4c4c; height: 9.500px; border-radius: 1.500px; display: flex; align-items: center; padding: 0 3px 0 1.500px; justify-content: space-between; color: #d0d0d0; }
.l2 .dd:nth-child(2) { margin-right: 9px; }
.comp { height: 13px; background: #3e3e3e; border-bottom: 1px solid #303030; display: grid; grid-template-columns: 9px 10.500px 11.500px 249.500px 12px 12px 3px; align-items: center; padding-left: 4px; }
.comp .tw { color: #777; }
.comp b { color: #cfcfcf; }
.comp .i7, .comp .keb { color: #bbb; }
.xyzs { height: 42px; padding-top: 2px; border-bottom: 1px solid #222; }
.xyz { height: 11.700px; display: grid; grid-template-columns: 111px 13px 8.700px 49.300px 12px 49px 12px 49px; align-items: center; padding-left: 11px; }
.xyz em + .inp ~ em { padding-left: 2.800px; }
.props { padding: 1.850px 0 0 10px; }
.p { height: 11.700px; width: 302px; display: grid; grid-template-columns: 124px 178px; align-items: center; padding-left: 1px; }
.obj .inp { gap: 1.500px; padding-right: 1px; }
.obj .inp span { flex: 1; }
.obj .inp .i7 { margin-right: 2px; }
.gray { color: #777; }
.gray .inp { color: #777; background: #333; border-color: #2c2c2c; }
h4 { margin: 0 0 2.700px; height: 15.300px; width: 302px; padding-top: 6.500px; font-size: 7.4px; font-weight: 600; line-height: 8px; color: #cdcdcd; border-bottom: 1px solid #505050; }
h4.first { height: 10.600px; padding-top: 1.700px; }
.note { height: 18px; width: 301px; margin: 0 0 2.500px 1px; border: 1px solid #282828; background: #3f3f3f; border-radius: 2px; display: flex; align-items: center; gap: 2.500px; padding-left: 4px; font-size: 6.450px; color: #aaa; }
.note svg { width: 10px; height: 10px; color: #fff; }
.col .inp { padding: 0 1px 0 0; justify-content: space-between; }
.sw { width: 167px; height: 9px; border-bottom: 2px solid #fff; }
.c-gray { background: #858585; }
.c-red { background: #e60000; }
.c-yellow { background: #fff60c; }
.c-blue { background: #0000e8; }
.act { height: 17.500px; margin: .4px 2px 0 9px; border: 1px solid #182a18; display: grid; place-items: center; font-size: 7.6px; }
.gen { background: #235224; color: #5fa75d; }
.clr { background: #451f22; color: #8d484a; border-color: #2a1717; }
.ivs { border: 0; background: #333; }
.ivs i { height: 574px; margin-top: 2px; }

.status { background: #131313; display: flex; justify-content: flex-end; align-items: center; gap: 7px; padding-right: 4px; color: #c8c8c8; }
.taskbar { background: #211e1f; border-top: 1px solid #3a3838; display: grid; grid-template-columns: 410px 25px 132.700px repeat(12, 25.650px) 1fr; align-items: center; font-family: "Open Sans", sans-serif; letter-spacing: -.15px; }
.weather { display: flex; gap: 3px; padding-left: 11px; color: #e8e8e8; font-size: 7.3px; line-height: 9.300px; align-items: center; padding-bottom: 1px; }
.weather svg { width: 16px; height: 15px; margin-bottom: 2px; }
.ic { width: 20px; height: 26px; overflow: visible; }
.tsearch { width: 128px; height: 19px; border-radius: 10px; background: #3c383a; display: flex; align-items: center; padding-left: 7px; gap: 6px; font-size: 8.300px; color: #d4d4d4; }
.crab { width: 26px; height: 17px; margin-left: auto; margin-right: 4px; }
.tray { display: grid; grid-template-columns: 18.500px 19px 12.500px 13px 18px 1fr; align-items: center; padding-right: 11px; margin-left: auto; width: 134px; }
.tray svg { width: 10px; height: 14px; }
.tray .bat { width: 14px; }
.clock { text-align: right; color: #e6e6e6; font-size: 7.3px; line-height: 9.300px; padding-bottom: 1px; display: flex; flex-direction: column; align-items: flex-end; justify-self: end; }
```
